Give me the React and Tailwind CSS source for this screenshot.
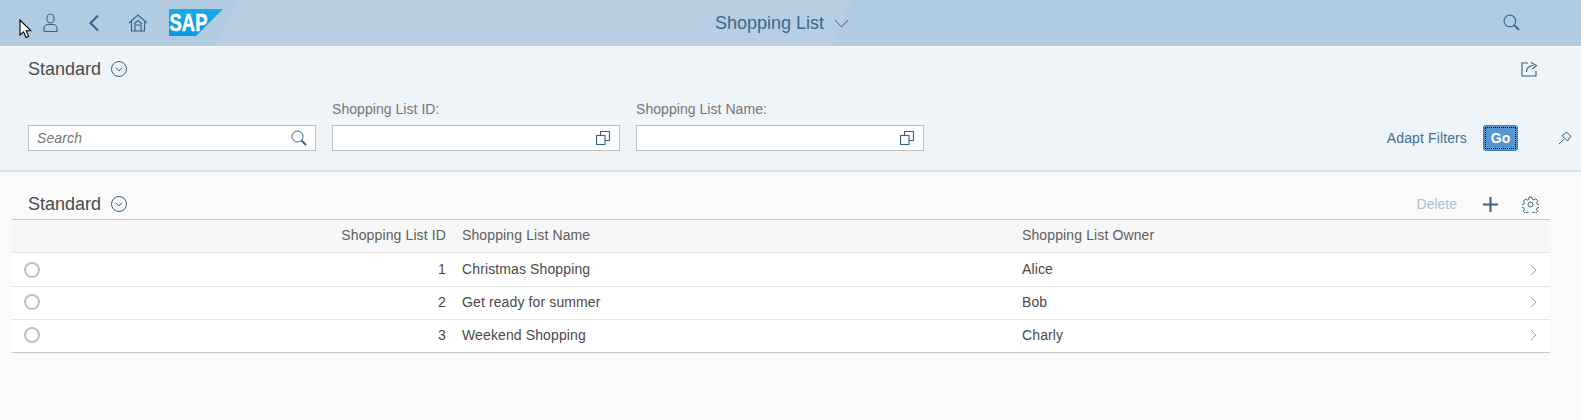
import React from "react";

const Circ = () => (
  <svg width="18" height="18" viewBox="0 0 18 18" fill="none" stroke="#346187" strokeWidth="1">
    <circle cx="9" cy="9" r="7.5" />
    <path d="M5.8 7.8 9 10.8 12.2 7.8" />
  </svg>
);

const ValueHelp = () => (
  <svg width="16" height="16" viewBox="0 0 16 16" fill="none" stroke="#346187" strokeWidth="1.1">
    <rect x="1.5" y="5.5" width="8.5" height="9" />
    <path d="M5.5 5.5V1.5H14.5V10.5H10" />
  </svg>
);

const Search = ({ size = 16 }) => (
  <svg width={size} height={size} viewBox="0 0 16 16" fill="none" stroke="#346187">
    <circle cx="6.5" cy="6.5" r="5.5" strokeWidth="1" />
    <path d="M10.5 10.5 15 15" strokeWidth="1.8" />
  </svg>
);

const rows = [
  ["1", "Christmas Shopping", "Alice", "h-[34px]"],
  ["2", "Get ready for summer", "Bob", "h-[33px] pb-[2px]"],
  ["3", "Weekend Shopping", "Charly", "h-[33px] pb-[2px]"],
];

const Field = ({ label, children }) => (
  <div className="flex w-[288px] flex-col">
    {label ? <label className="mb-[6px] h-[19px] text-[14px] leading-[19px] tracking-[0.05px] text-[#757575]">{label}</label> : null}
    <div className="flex h-[26px] items-center justify-between border border-[#bfbfbf] bg-white pl-[8px] pr-[8px]">
      {children}
    </div>
  </div>
);

export default function App() {
  return (
    <div className="relative h-[420px] overflow-hidden bg-[#fafafa] font-['Liberation_Sans',Arial,sans-serif] text-[14px] tracking-[0.12px] text-[#4a4a4a]">
      <header className="relative flex h-[46px] items-center overflow-hidden bg-[#b1cbe1]">
        <svg className="absolute inset-0" width="1581" height="46" viewBox="0 0 1581 46">
          <polygon points="215,46 237,0 852,0 832,46" fill="#b8cee3" />
        </svg>
        <div className="relative flex items-center pl-[43px]">
          <svg width="15" height="20" viewBox="0 0 15 20" fill="none" stroke="#346187" strokeWidth="1.1">
            <ellipse cx="7.5" cy="5.5" rx="3.6" ry="4.5" />
            <path d="M1 18.5V15.5C1 13 3 11.5 5 11.5H10C12 11.5 14 13 14 15.5V18.5H1Z" />
          </svg>
          <svg className="ml-[30px]" width="12" height="18" viewBox="0 0 12 18" fill="none" stroke="#346187" strokeWidth="2">
            <path d="M10 1.5 2.5 9 10 16.5" />
          </svg>
          <svg className="ml-[28px]" width="20" height="18" viewBox="0 0 20 18" fill="none" stroke="#346187" strokeWidth="1.1">
            <path d="M1 9 10 1 19 9M3.5 7.5V17H16.5V7.5M7 17V11H13V17M6 10 10 6.5 14 10" />
          </svg>
          <svg className="ml-[21px]" width="54" height="28" viewBox="0 0 54 28">
            <defs>
              <linearGradient id="sapblue" x1="0" y1="0" x2="0" y2="1">
                <stop offset="0" stopColor="#1aa9e4" />
                <stop offset="1" stopColor="#0a9ade" />
              </linearGradient>
            </defs>
            <polygon points="0,0 54,0 27,27 0,27" fill="url(#sapblue)" />
            <text x="0.5" y="22" fontFamily="'Liberation Sans',Arial,sans-serif" fontWeight="700" fontSize="24" fill="#ffffff" stroke="#ffffff" strokeWidth="0.5" textLength="38" lengthAdjust="spacingAndGlyphs">SAP</text>
          </svg>
        </div>
        <div className="absolute left-[715px] top-0 flex h-[46px] items-center text-[18px] tracking-normal text-[#3a6890]">
          <span>Shopping List</span>
          <svg className="ml-[10px]" width="15" height="9" viewBox="0 0 15 9" fill="none" stroke="#346187" strokeWidth="1">
            <path d="M1 1 7.5 8 14 1" />
          </svg>
        </div>
        <div className="absolute left-[1503px] top-[14px]">
          <Search size={17} />
        </div>
      </header>

      <section className="h-[126px] border-b-2 border-[#d3e0ef] bg-[#eff4f9] px-[28px]">
        <div className="flex h-[45px] items-center justify-between pt-[1px]">
          <div className="flex items-center gap-[9px]">
            <span className="text-[18px] leading-[22px] tracking-normal text-[#4d4d4d]">Standard</span>
            <Circ />
          </div>
          <svg className="mr-[15px]" width="17" height="16" viewBox="0 0 17 16" fill="none" stroke="#346187" strokeWidth="1.1">
            <path d="M7 2H1V15H15V10M5.5 11C5.5 7 8 4.5 12.5 4.5M10 1.5 15.5 4.5 11.5 8" />
          </svg>
        </div>
        <div className="flex items-end gap-[16px] pt-[9px]">
          <Field>
            <span className="text-[14px] italic text-[#757575]">Search</span>
            <Search />
          </Field>
          <Field label="Shopping List ID:">
            <span />
            <ValueHelp />
          </Field>
          <Field label="Shopping List Name:">
            <span />
            <ValueHelp />
          </Field>
          <div className="ml-auto flex h-[26px] items-center">
            <span className="text-[14px] text-[#426f99]">Adapt Filters</span>
            <span className="ml-[16px] flex h-[26px] w-[35px] items-center justify-center rounded-[3px] border border-[#3f7fb5] bg-[#5496cd] text-[14px] font-bold tracking-normal text-white outline-1 outline-offset-[-3px] outline-dotted outline-black">
              Go
            </span>
            <svg className="ml-[40px] -mr-[19px]" width="14" height="14" viewBox="0 0 14 14" fill="none" stroke="#346187" strokeWidth="1">
              <path d="M8.5 1 13 5.5 11.5 6.5 9.5 10 4 4.5 7.5 2.5ZM5.5 8.5 1 13" />
            </svg>
          </div>
        </div>
      </section>

      <main className="mx-[12px] w-[1538px]">
        <div className="flex h-[47px] items-center justify-between pl-[16px] pt-[17px]">
          <div className="flex items-center gap-[9px]">
            <span className="text-[18px] leading-[22px] tracking-normal">Standard</span>
            <Circ />
          </div>
          <div className="flex items-center pr-[11px]">
            <span className="text-[14px] tracking-normal text-[#a9bed4]">Delete</span>
            <svg className="ml-[26px]" width="15" height="15" viewBox="0 0 15 15" stroke="#346187" strokeWidth="2">
              <path d="M0 7.5H15M7.5 0V15" />
            </svg>
            <svg className="ml-[24px]" width="17" height="17" viewBox="0 0 24 24" fill="none" stroke="#346187" strokeWidth="1.4">
              <circle cx="12" cy="12" r="3.5" />
              <path d="M10 1.5h4l.6 3 2.2 1 2.6-1.6 2.8 2.8-1.6 2.6 1 2.2 3 .6v4l-3 .6-1 2.2 1.6 2.6-2.8 2.8-2.6-1.6-2.2 1-.6 3h-4l-.6-3-2.2-1-2.6 1.6-2.8-2.8 1.6-2.6-1-2.2-3-.6v-4l3-.6 1-2.2L2.1 7l2.8-2.8 2.6 1.6 2.2-1z" />
            </svg>
          </div>
        </div>
        <div className="flex h-[34px] items-center border-y border-t-[#c8c8c8] border-b-[#e5e5e5] bg-[#f7f7f7] pb-[2px] text-[#5e5e5e]">
          <div className="w-[442px] pr-[8px] text-right">Shopping List ID</div>
          <div className="w-[560px] pl-[8px]">Shopping List Name</div>
          <div className="flex-1 pl-[8px]">Shopping List Owner</div>
        </div>
        {rows.map(([id, name, owner, h], i) => (
          <div
            key={id}
            className={`flex items-center bg-white ${h} border-b ${i === 2 ? "border-[#c8c8c8]" : "border-[#e5e5e5]"}`}
          >
            <div className="flex w-[442px] items-center justify-between pl-[12px] pr-[8px]">
              <span className="h-[16px] w-[16px] rounded-full border-2 border-[#bfbfbf] bg-white" />
              <span>{id}</span>
            </div>
            <div className="w-[560px] pl-[8px]">{name}</div>
            <div className="flex flex-1 items-center justify-between pl-[8px] pr-[13px]">
              <span>{owner}</span>
              <svg width="7" height="12" viewBox="0 0 7 12" fill="none" stroke="#a6a6a6" strokeWidth="1">
                <path d="M1 1 6 6 1 11" />
              </svg>
            </div>
          </div>
        ))}
      </main>

      <svg className="absolute left-[19px] top-[19px]" width="13" height="20" viewBox="0 0 13 20">
        <path d="M1 1V16L4.6 12.8 7 18.5 9.6 17.4 7.2 11.8H12Z" fill="#ffffff" stroke="#000000" strokeWidth="1.1" />
      </svg>
    </div>
  );
}
